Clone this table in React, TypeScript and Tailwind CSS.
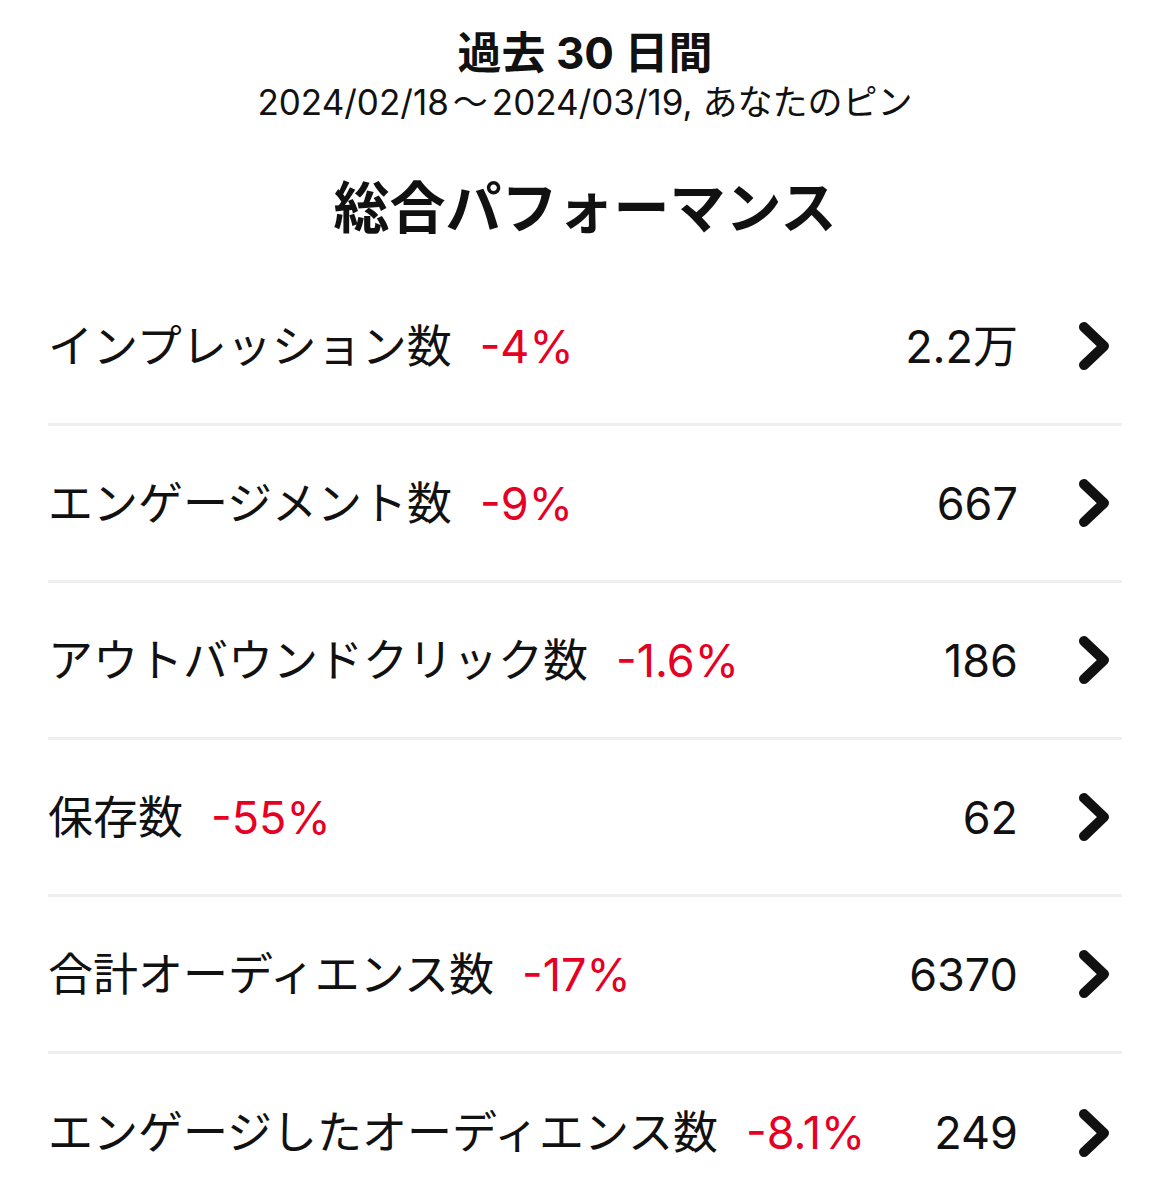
const rows = [
  { label: 'インプレッション数', delta: '-4%', value: '2.2万' },
  { label: 'エンゲージメント数', delta: '-9%', value: '667' },
  { label: 'アウトバウンドクリック数', delta: '-1.6%', value: '186' },
  { label: '保存数', delta: '-55%', value: '62' },
  { label: '合計オーディエンス数', delta: '-17%', value: '6370' },
  { label: 'エンゲージしたオーディエンス数', delta: '-8.1%', value: '249' },
];

function Chevron() {
  return (
    <svg width="40" height="50" viewBox="0 0 40 50" className="shrink-0">
      <polyline
        points="10,6 30,25 10,44"
        fill="none"
        stroke="#111111"
        strokeWidth="10"
        strokeLinecap="round"
        strokeLinejoin="round"
      />
    </svg>
  );
}

export default function App() {
  return (
    <div className="min-h-[1192px] bg-white text-[#111111] [font-family:Inter,'Noto_Sans_CJK_JP',sans-serif]">
      <div className="pt-[28px] text-center">
        <div className="text-[44px] font-bold leading-[50px]">過去 30 日間</div>
        <div className="mt-[2px] text-[35px] leading-[44px]">
          2024/02/18<span className="mx-[4px]">～</span>2024/03/19, あなたのピン
        </div>
        <h1 className="mt-[52px] text-[56px] font-bold leading-[64px]">総合パフォーマンス</h1>
      </div>

      <div className="mx-[48px] mt-[29px]">
        {rows.map((r, i) => (
          <div
            key={r.label}
            className={
              i < rows.length - 1
                ? 'flex h-[157px] items-center border-b-[3px] border-[#efefef] text-[45px] leading-none'
                : 'flex h-[157px] items-center text-[45px] leading-none'
            }
          >
            <span className="whitespace-nowrap">{r.label}</span>
            <span className="ml-[28px] whitespace-nowrap text-[#e60023]">{r.delta}</span>
            <span className="flex-1 whitespace-nowrap text-right">{r.value}</span>
            <span className="ml-[56px] mr-[8px] flex items-center">
              <Chevron />
            </span>
          </div>
        ))}
      </div>
    </div>
  );
}
